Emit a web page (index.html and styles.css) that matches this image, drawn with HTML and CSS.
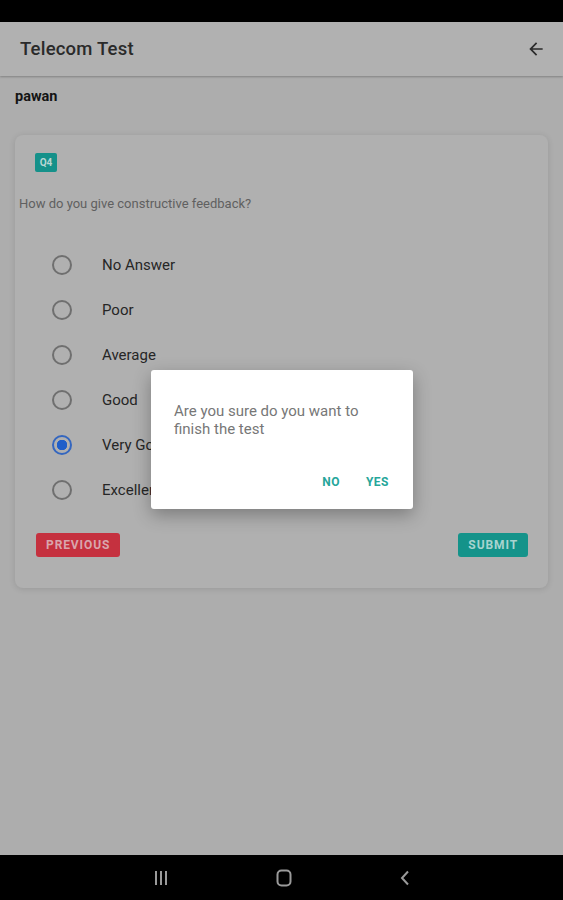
FILE: index.html
```html
<!DOCTYPE html>
<html lang="en">

<head>
    <meta charset="UTF-8" />
    <title>Telecom Test</title>
    <meta name="viewport" content="width=device-width, initial-scale=1" />
    <link rel="stylesheet" href="styles.css">
</head>

<body>
    <div class="screen">
        <div class="status-bar"></div>

        <header class="app-bar">
            <h1>Telecom Test</h1>
            <svg class="back" width="20" height="20" viewBox="0 0 24 24">
                <path d="M20 11H7.83l5.59-5.59L12 4l-8 8 8 8 1.41-1.41L7.83 13H20v-2z" fill="#2b2b2b" />
            </svg>
        </header>

        <main class="content">
            <p class="user">pawan</p>

            <div class="card">
                <span class="badge">Q4</span>
                <p class="question">How do you give constructive feedback?</p>

                <div class="options">
                    <label class="option"><span class="radio"></span>No Answer</label>
                    <label class="option"><span class="radio"></span>Poor</label>
                    <label class="option"><span class="radio"></span>Average</label>
                    <label class="option"><span class="radio"></span>Good</label>
                    <label class="option"><span class="radio checked"></span>Very Good</label>
                    <label class="option"><span class="radio"></span>Excellent</label>
                </div>

                <div class="actions">
                    <a class="btn btn-previous">PREVIOUS</a>
                    <a class="btn btn-submit">SUBMIT</a>
                </div>
            </div>

            <div class="dialog">
                <p>Are you sure do you want to finish the test</p>
                <div class="dialog-actions">
                    <a>NO</a>
                    <a>YES</a>
                </div>
            </div>
        </main>

        <nav class="nav-bar">
            <svg width="14" height="16" viewBox="0 0 14 16">
                <path d="M2 1v14M7 1v14M12 1v14" stroke="#9a9a9a" stroke-width="2" />
            </svg>
            <svg width="16" height="18" viewBox="0 0 16 18">
                <rect x="1.5" y="1.5" width="13" height="15" rx="4" fill="none" stroke="#9a9a9a" stroke-width="2" />
            </svg>
            <svg width="10" height="16" viewBox="0 0 10 16">
                <path d="M8 1.5L2 8l6 6.5" fill="none" stroke="#9a9a9a" stroke-width="2" />
            </svg>
        </nav>
    </div>
</body>

</html>
```

FILE: styles.css
```css
body,
html {
    margin: 0;
    padding: 0;
    font-family: Roboto, "Noto Sans", sans-serif;
    background-color: #000;
}

.screen {
    width: 563px;
    height: 900px;
    display: flex;
    flex-direction: column;
    background-color: #adadad;
}

.status-bar {
    height: 22px;
    background-color: #000;
}

.app-bar {
    height: 54px;
    display: flex;
    align-items: center;
    justify-content: space-between;
    padding: 0 17px 0 20px;
    background-color: #b1b1b1;
    box-shadow: 0 1px 2px rgba(0, 0, 0, 0.25);
    position: relative;
    z-index: 1;
}

.app-bar h1 {
    margin: 0;
    font-size: 18.5px;
    font-weight: 500;
    color: #2a2a2a;
    letter-spacing: 0.2px;
}

.content {
    flex: 1;
    position: relative;
    padding: 0 15px;
}

.user {
    margin: 12px 0 0;
    font-size: 14.5px;
    font-weight: bold;
    color: #141414;
    line-height: 18px;
}

.card {
    margin-top: 29px;
    padding: 16px 20px 31px 4px;
    background-color: #b0b0b0;
    border-radius: 8px;
    box-shadow: 0 1px 6px rgba(0, 0, 0, 0.12);
}

.badge {
    display: inline-block;
    margin-left: 16px;
    width: 22px;
    height: 19px;
    line-height: 19px;
    text-align: center;
    font-size: 10px;
    font-weight: bold;
    color: #b9d6d3;
    background-color: #15918a;
    border-radius: 2px;
}

.question {
    margin: 24px 0 0;
    font-size: 13px;
    line-height: 16px;
    color: #606060;
}

.options {
    margin-top: 42px;
    display: flex;
    flex-direction: column;
    gap: 23px;
}

.option {
    display: flex;
    align-items: center;
    height: 22px;
    padding-left: 33px;
    font-size: 15px;
    color: #262626;
}

.radio {
    width: 16px;
    height: 16px;
    border: 2px solid #6f6f6f;
    border-radius: 50%;
    margin-right: 30px;
    box-sizing: content-box;
}

.radio.checked {
    border-color: #3466bf;
    background: radial-gradient(circle, #1f5ec9 0 5px, transparent 5.5px);
}

.actions {
    margin-top: 32px;
    padding-left: 17px;
    display: flex;
    justify-content: space-between;
}

.btn {
    display: inline-block;
    height: 24px;
    line-height: 24px;
    padding: 0 10px;
    font-size: 12px;
    font-weight: bold;
    letter-spacing: 0.9px;
    border-radius: 3px;
    text-decoration: none;
}

.btn-previous {
    background-color: #c5313f;
    color: #d9a6ad;
}

.btn-submit {
    background-color: #14938a;
    color: #a8d3cf;
}

.dialog {
    position: absolute;
    left: 151px;
    top: 294px;
    width: 262px;
    height: 139px;
    box-sizing: border-box;
    padding: 32px 24px 0 23px;
    background-color: #fff;
    border-radius: 3px;
    box-shadow: 0 6px 18px rgba(0, 0, 0, 0.3);
}

.dialog p {
    margin: 0;
    font-size: 15px;
    line-height: 18px;
    color: #777;
}

.dialog-actions {
    margin-top: 37px;
    display: flex;
    justify-content: flex-end;
    gap: 26px;
}

.dialog-actions a {
    font-size: 12px;
    font-weight: bold;
    letter-spacing: 0.5px;
    color: #26a69a;
}

.nav-bar {
    height: 45px;
    background-color: #000;
    display: flex;
    align-items: center;
    justify-content: center;
    gap: 108px;
}
```
